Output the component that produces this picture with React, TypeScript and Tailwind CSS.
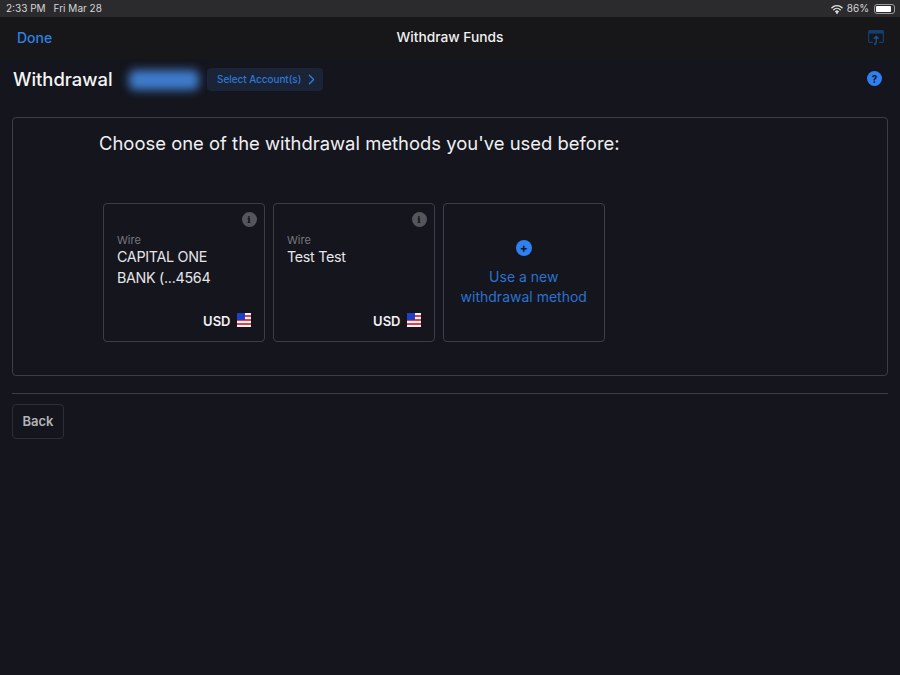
import { ChevronRight } from 'lucide-react';

function InfoBadge() {
  return (
    <div className="absolute top-[8px] right-[7px] w-[15px] h-[15px] rounded-full bg-[#54565c] flex items-center justify-center">
      <span className="text-[10px] leading-none font-bold text-[#14151d] font-['DejaVu_Serif',serif]">i</span>
    </div>
  );
}

function UsFlag() {
  return (
    <svg width="14" height="14" viewBox="0 0 14 14" className="mb-[2px]" aria-hidden="true">
      <rect width="14" height="14" fill="#f4f4f4" />
      <rect y="2" width="14" height="2" fill="#e0404a" />
      <rect y="6" width="14" height="2" fill="#e0404a" />
      <rect y="10" width="14" height="2" fill="#e0404a" />
      <rect width="8" height="7" fill="#1f3fc4" />
    </svg>
  );
}

function MethodCard({ lines }: { lines: string[] }) {
  return (
    <div className="relative w-[161.5px] h-[139px] rounded-[4px] border border-[#3c3e47] pt-[30px] pl-[13px]">
      <InfoBadge />
      <p className="text-[11px] leading-[13px] text-[#77787e]">Wire</p>
      <div className="text-[14.3px] tracking-[-0.3px] leading-[20.5px] text-[#e6e6e8]">
        {lines.map(line => (
          <p key={line}>{line}</p>
        ))}
      </div>
      <div className="absolute right-[13px] bottom-[12px] flex items-center gap-[6px]">
        <span className="text-[13px] leading-[16px] font-semibold text-[#f0f0f2]">USD</span>
        <UsFlag />
      </div>
    </div>
  );
}

export default function App() {
  return (
    <div className="w-[900px] h-[675px] overflow-hidden bg-[#14151d] font-['Inter',sans-serif] flex flex-col">
      {/* Status bar */}
      <div className="h-[17px] bg-[#2b2b2d] pl-[6px] pr-[5px] flex items-center justify-between text-[10px] text-[#d6d6d6]">
        <div className="flex gap-[8px]">
          <span>2:33 PM</span>
          <span>Fri Mar 28</span>
        </div>
        <div className="flex items-center gap-[4px]">
          <svg width="12" height="10" viewBox="0 0 13 10" fill="none" stroke="#e6e6e6" strokeWidth="1.5" strokeLinecap="round" aria-hidden="true">
            <path d="M1 3.6a7.8 7.8 0 0 1 11 0" />
            <path d="M3 5.7a5 5 0 0 1 7 0" />
            <path d="M5.2 7.7a2 2 0 0 1 2.6 0" />
            <circle cx="6.5" cy="9" r="0.5" fill="#e6e6e6" />
          </svg>
          <span>86%</span>
          <div className="ml-[1px] w-[21px] h-[10px] rounded-[3px] border border-[#9a9a9a] p-[1px]">
            <div className="w-[15px] h-full rounded-[1px] bg-white" />
          </div>
        </div>
      </div>

      {/* Nav bar */}
      <div className="h-[42px] bg-[#171719] pl-[17px] pr-[16px] pb-[2px] flex items-center justify-between relative">
        <span className="text-[14px] font-medium text-[#2f80e4]">Done</span>
        <span className="absolute inset-x-0 text-center text-[13.75px] font-medium text-[#f0f0f2]">Withdraw Funds</span>
        <svg width="16" height="15" viewBox="0 0 16 15" fill="none" aria-hidden="true">
          <path d="M5 12.4H2.1a1.5 1.5 0 0 1-1.5-1.5V2.1A1.5 1.5 0 0 1 2.1.6h11.8a1.5 1.5 0 0 1 1.5 1.5v8.8a1.5 1.5 0 0 1-1.5 1.5H11" stroke="#123f73" strokeWidth="1.2" />
          <rect x="0.6" y="0.6" width="14.8" height="3" fill="#123f73" />
          <path d="M6 14.4c1.4-.2 2.2-1.4 2.2-3V6.6M5.8 8.8l2.4-2.4 2.4 2.4" stroke="#1a5596" strokeWidth="1.3" />
        </svg>
      </div>

      <div className="flex-1 bg-[#14151d] px-[12px] flex flex-col">
        {/* Title row */}
        <div className="h-[41px] mb-[17px] flex items-center relative">
          <h1 className="w-[117px] pl-[1px] text-[18.4px] font-medium text-[#f5f5f6]">Withdrawal</h1>
          <div className="w-[70px] h-[20px] rounded-[6px] bg-[#3f7ccd] blur-[5px]" />
          <div className="ml-[8px] h-[23px] w-[116px] rounded-[4px] bg-[#1a2436] flex items-center pl-[10px]">
            <span className="text-[9.9px] font-medium text-[#2f78d8]">Select Account(s)</span>
            <ChevronRight className="ml-[2px] w-[17px] h-[17px] text-[#2f80e4]" strokeWidth={1.75} />
          </div>
          <div className="absolute right-[6px] top-[12px] w-[15px] h-[15px] rounded-full bg-[#2f80f0] flex items-center justify-center">
            <span className="text-[10px] leading-none font-bold text-[#14151d]">?</span>
          </div>
        </div>

        {/* Panel */}
        <div className="h-[259px] rounded-[4px] border border-[#3c3e47] pl-[86px] pt-[13px]">
          <p className="text-[18.46px] leading-[24px] text-[#f0f0f2]">Choose one of the withdrawal methods you've used before:</p>
          <div className="mt-[48px] ml-[4px] flex gap-[8.5px]">
            <MethodCard lines={['CAPITAL ONE', 'BANK (...4564']} />
            <MethodCard lines={['Test Test']} />
            <div className="w-[161.5px] h-[139px] rounded-[4px] border border-[#3c3e47] flex flex-col items-center pt-[36px]">
              <div className="w-[16px] h-[16px] rounded-full bg-[#2f80f0] flex items-center justify-center">
                <span className="text-[12px] leading-none font-bold text-[#14151d]">+</span>
              </div>
              <p className="mt-[11px] text-[14px] leading-[20px] text-center text-[#2b72d0]">
                Use a new
                <br />
                withdrawal method
              </p>
            </div>
          </div>
        </div>

        <div className="mt-[17px] h-[1px] bg-[#3c3e47]" />

        <button className="mt-[10px] w-[52px] h-[35px] rounded-[4px] border border-[#2d2f38] text-[13px] font-semibold text-[#b4b4b8]">
          Back
        </button>
      </div>
    </div>
  );
}
